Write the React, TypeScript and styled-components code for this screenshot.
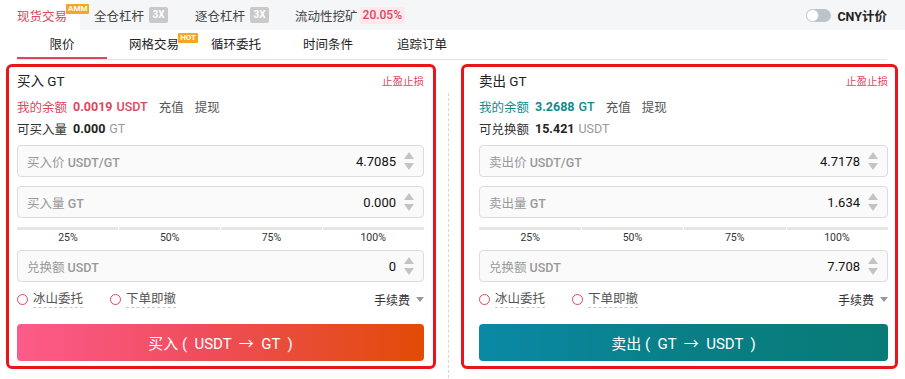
import React from 'react';
import styled, { createGlobalStyle } from 'styled-components';

const GlobalStyle = createGlobalStyle`
    body {
        margin: 0;
        background: #ffffff;
        font-family: "Roboto", "Noto Sans CJK SC", sans-serif;
        color: #222;
    }
`

const Page = styled.div`
    width: 905px;
    height: 379px;
    overflow: hidden;
`

const TopBar = styled.div`
    height: 30px;
    background: #f5f6f7;
    display: flex;
    align-items: center;
    font-size: 12.5px;
    color: #444;
`

const MarketTab = styled.div<{ $active?: boolean; $ml?: number }>`
    height: 30px;
    display: flex;
    align-items: center;
    margin-left: ${p => p.$ml || 0}px;
    padding-left: ${p => (p.$active ? 17 : 0)}px;
    padding-right: ${p => (p.$active ? 13 : 0)}px;
    background: ${p => (p.$active ? '#fff' : 'transparent')};
    color: ${p => (p.$active ? '#e2455e' : '#444')};
`

const Label = styled.span`
    position: relative;
`

const Badge = styled.span`
    position: absolute;
    top: -2px;
    left: calc(100% - 1px);
    background: #f5a623;
    color: #fff;
    font-size: 8px;
    font-weight: 700;
    line-height: 10px;
    padding: 0 2px;
    border-radius: 1px;
`

const Lever = styled.span`
    margin-left: 5px;
    background: #c9c9c9;
    color: #fff;
    font-size: 10px;
    font-weight: 700;
    width: 19px;
    height: 16px;
    line-height: 16px;
    text-align: center;
    border-radius: 2px;
`

const Apy = styled.span`
    margin-left: 2px;
    background: #fde9ec;
    color: #e2455e;
    font-size: 12px;
    font-weight: 500;
    height: 17px;
    line-height: 17px;
    padding: 0 3px;
    border-radius: 2px;
`

const Spacer = styled.div`
    flex: 1;
`

const Toggle = styled.span`
    position: relative;
    width: 25px;
    height: 13px;
    border-radius: 7px;
    background: #b9c4cb;

    &::before {
        content: '';
        position: absolute;
        left: 0;
        top: 0;
        width: 11px;
        height: 11px;
        border-radius: 50%;
        background: #fff;
        border: 1px solid #c9d1d6;
    }
`

const Cny = styled.span`
    margin: 0 18px 0 6px;
    font-weight: 700;
    color: #222;
`

const TabRow = styled.div`
    margin: 0 18px 0 17px;
    height: 29px;
    border-bottom: 1px solid #e3e3e3;
    display: flex;
    align-items: center;
    font-size: 12.5px;
    color: #222;
`

const OrderTab = styled.div<{ $active?: boolean; $ml?: number; $w?: number }>`
    position: relative;
    height: 29px;
    line-height: 29px;
    margin-left: ${p => p.$ml || 0}px;
    width: ${p => (p.$w ? p.$w + 'px' : 'auto')};
    text-align: center;
    box-shadow: ${p => (p.$active ? 'inset 0 -2px 0 #e2455e' : 'none')};
`

const HotBadge = styled.span`
    position: absolute;
    top: 3px;
    right: -19px;
    background: #f5a623;
    color: #fff;
    font-size: 8px;
    font-weight: 700;
    line-height: 10px;
    padding: 0 2px;
    border-radius: 1px;
`

const Main = styled.div`
    display: flex;
    margin-top: 4px;
    padding-left: 6px;
`

const Frame = styled.div<{ $w: number; $pl: number; $pr: number }>`
    width: ${p => p.$w}px;
    box-sizing: border-box;
    height: 305px;
    border: 3px solid #e8151d;
    border-radius: 6px;
    padding: 3px ${p => p.$pr}px 0 ${p => p.$pl}px;
`

const Divider = styled.div`
    width: 25px;
    display: flex;
    justify-content: center;
    padding-top: 29px;

    &::after {
        content: '';
        width: 0;
        height: 290px;
        border-left: 1px dashed #d6d6d6;
    }
`

const TitleRow = styled.div`
    display: flex;
    align-items: center;
    justify-content: space-between;
    height: 20px;
`

const Title = styled.span`
    font-size: 13.5px;
    color: #222;
`

const StopLink = styled.span`
    font-size: 10.5px;
    color: #e2455e;
`

const InfoRow = styled.div<{ $color?: string }>`
    display: flex;
    align-items: center;
    height: 20px;
    margin-top: ${p => (p.$color ? 6 : 2)}px;
    font-size: 12.5px;
    color: ${p => p.$color || '#333'};
`

const Strong = styled.span<{ $color?: string }>`
    margin-left: 6px;
    font-weight: 700;
    color: ${p => p.$color || 'inherit'};
`

const Unit = styled.span<{ $grey?: boolean }>`
    margin-left: 4px;
    font-weight: ${p => (p.$grey ? 400 : 500)};
    color: ${p => (p.$grey ? '#999' : 'inherit')};
`

const Action = styled.span`
    color: #555;
    margin-left: 11px;
`

const Field = styled.div<{ $mt: number }>`
    margin-top: ${p => p.$mt}px;
    height: 32px;
    box-sizing: border-box;
    border: 1px solid #dcdcdc;
    border-radius: 4px;
    background: #fafafa;
    display: flex;
    align-items: center;
    padding: 0 9px 0 9px;
    font-size: 12.5px;
`

const FieldLabel = styled.span`
    color: #999;
    flex: 1;

    b {
        font-weight: 500;
    }
`

const FieldValue = styled.span`
    color: #111;
    font-size: 13px;
    font-weight: 400;
`

const Spinner = styled.svg`
    margin-left: 8px;
    flex: none;
`

const SliderTrack = styled.div`
    margin-top: 9px;
    display: grid;
    grid-template-columns: repeat(4, 1fr);
    gap: 1px;
`

const Segment = styled.div`
    height: 3px;
    background: #e6e6e6;
`

const SliderLabels = styled.div`
    display: grid;
    grid-template-columns: repeat(4, 1fr);
    height: 15px;
    line-height: 15px;
    font-size: 10.5px;
    color: #333;
    text-align: center;
`

const OptionRow = styled.div`
    margin-top: 7px;
    height: 20px;
    display: flex;
    align-items: center;
    font-size: 12.5px;
    color: #555;
`

const Option = styled.span<{ $ml?: number }>`
    display: flex;
    align-items: center;
    margin-left: ${p => p.$ml || 0}px;
`

const Radio = styled.span`
    width: 9px;
    height: 9px;
    border-radius: 50%;
    border: 1px solid #e2455e;
    margin-right: 5px;
`

const Dashed = styled.span`
    border-bottom: 1px dashed #c8c8c8;
    line-height: 16px;
`

const Fee = styled.span`
    margin-left: auto;
    display: flex;
    align-items: center;
    color: #333;
    font-size: 12px;
`

const Caret = styled.span`
    margin-left: 6px;
    width: 0;
    height: 0;
    border-left: 4px solid transparent;
    border-right: 4px solid transparent;
    border-top: 5px solid #999;
`

const SubmitButton = styled.div<{ $side: 'buy' | 'sell' }>`
    margin-top: 15px;
    height: 37px;
    border-radius: 4px;
    display: flex;
    align-items: center;
    justify-content: center;
    color: #fff;
    font-size: 15px;
    white-space: pre;
    background: ${p =>
        p.$side === 'buy'
            ? 'linear-gradient(90deg, #fd5b8b 0%, #ef4d5c 45%, #e14b05 100%)'
            : 'linear-gradient(90deg, #0a89a6 0%, #097f86 50%, #087b76 100%)'};
`

const Arrows = () => (
    <Spinner width="10" height="19" viewBox="0 0 10 19">
        <path d="M5 0 L10 7 L0 7 Z" fill="#c4c4c4" />
        <path d="M0 11 L10 11 L5 18 Z" fill="#c4c4c4" />
    </Spinner>
);

interface PanelProps {
    side: 'buy' | 'sell';
    title: string;
    accent: string;
    balance: string;
    balanceUnit: string;
    availLabel: string;
    avail: string;
    availUnit: string;
    priceLabel: string;
    price: string;
    amountLabel: string;
    amount: string;
    total: string;
    button: string;
}

const TradePanel = (props: PanelProps) => (
    <>
        <TitleRow>
            <Title>{props.title}</Title>
            <StopLink>止盈止损</StopLink>
        </TitleRow>
        <InfoRow $color={props.accent}>
            我的余额
            <Strong>{props.balance}</Strong>
            <Unit>{props.balanceUnit}</Unit>
            <Action>充值</Action>
            <Action>提现</Action>
        </InfoRow>
        <InfoRow>
            {props.availLabel}
            <Strong $color="#222">{props.avail}</Strong>
            <Unit $grey>{props.availUnit}</Unit>
        </InfoRow>
        <Field $mt={7}>
            <FieldLabel>{props.priceLabel} <b>USDT/GT</b></FieldLabel>
            <FieldValue>{props.price}</FieldValue>
            <Arrows />
        </Field>
        <Field $mt={9}>
            <FieldLabel>{props.amountLabel} <b>GT</b></FieldLabel>
            <FieldValue>{props.amount}</FieldValue>
            <Arrows />
        </Field>
        <SliderTrack>
            <Segment /><Segment /><Segment /><Segment />
        </SliderTrack>
        <SliderLabels>
            <span>25%</span><span>50%</span><span>75%</span><span>100%</span>
        </SliderLabels>
        <Field $mt={5}>
            <FieldLabel>兑换额 <b>USDT</b></FieldLabel>
            <FieldValue>{props.total}</FieldValue>
            <Arrows />
        </Field>
        <OptionRow>
            <Option><Radio /><Dashed>冰山委托</Dashed></Option>
            <Option $ml={27}><Radio /><Dashed>下单即撤</Dashed></Option>
            <Fee>手续费<Caret /></Fee>
        </OptionRow>
        <SubmitButton $side={props.side}>{props.button}</SubmitButton>
    </>
);

export default function App() {
    return (
        <Page>
            <GlobalStyle />
            <TopBar>
                <MarketTab $active><Label>现货交易<Badge>AMM</Badge></Label></MarketTab>
                <MarketTab $ml={14}>全仓杠杆</MarketTab>
                <Lever>3X</Lever>
                <MarketTab $ml={27}>逐仓杠杆</MarketTab>
                <Lever>3X</Lever>
                <MarketTab $ml={26}>流动性挖矿</MarketTab>
                <Apy>20.05%</Apy>
                <Spacer />
                <Toggle />
                <Cny>CNY计价</Cny>
            </TopBar>
            <TabRow>
                <OrderTab $active $w={90}>限价</OrderTab>
                <OrderTab $ml={22}>网格交易<HotBadge>HOT</HotBadge></OrderTab>
                <OrderTab $ml={32}>循环委托</OrderTab>
                <OrderTab $ml={42}>时间条件</OrderTab>
                <OrderTab $ml={44}>追踪订单</OrderTab>
            </TabRow>
            <Main>
                <Frame $w={430} $pl={8} $pr={9}>
                    <TradePanel
                        side="buy"
                        title="买入 GT"
                        accent="#e2455e"
                        balance="0.0019"
                        balanceUnit="USDT"
                        availLabel="可买入量"
                        avail="0.000"
                        availUnit="GT"
                        priceLabel="买入价"
                        price="4.7085"
                        amountLabel="买入量"
                        amount="0.000"
                        total="0"
                        button="买入 (  USDT  →  GT  )"
                    />
                </Frame>
                <Divider />
                <Frame $w={437} $pl={15} $pr={7}>
                    <TradePanel
                        side="sell"
                        title="卖出 GT"
                        accent="#0f8b8d"
                        balance="3.2688"
                        balanceUnit="GT"
                        availLabel="可兑换额"
                        avail="15.421"
                        availUnit="USDT"
                        priceLabel="卖出价"
                        price="4.7178"
                        amountLabel="卖出量"
                        amount="1.634"
                        total="7.708"
                        button="卖出 (  GT  →  USDT  )"
                    />
                </Frame>
            </Main>
        </Page>
    );
}
